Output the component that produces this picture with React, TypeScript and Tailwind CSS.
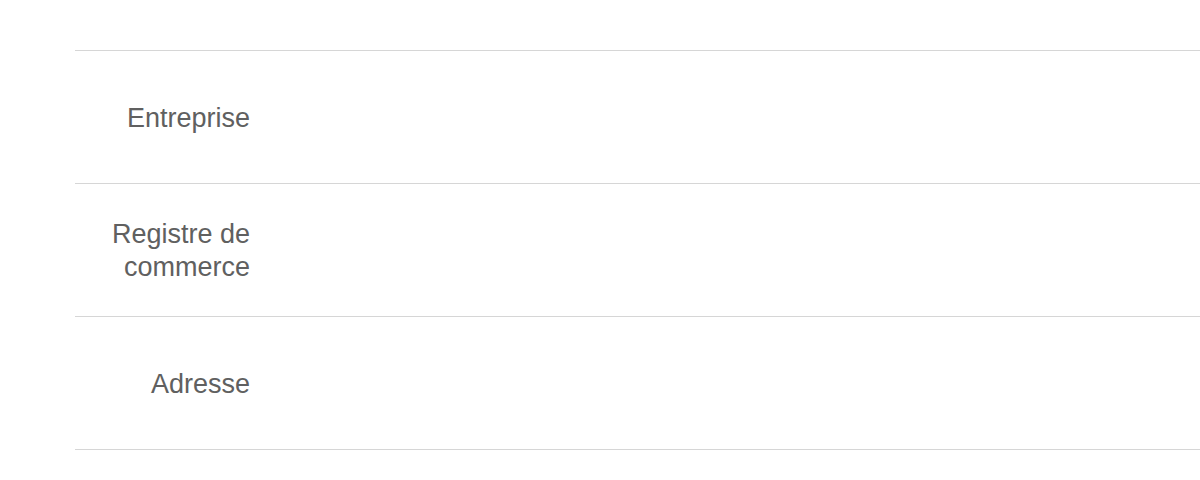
const ROWS = [
  { label: "Catégorie" },
  { label: "Entreprise" },
  { label: "Registre de commerce", lines: ["Registre de", "commerce"] },
  { label: "Adresse" },
]

export default function App() {
  return (
    <div
      className="h-[480px] w-[1200px] overflow-hidden bg-white"
      style={{ fontFamily: '"Liberation Sans", Arial, sans-serif' }}
    >
      <div className="-mt-[82px] ml-[75px]">
        {ROWS.map((row) => (
          <div key={row.label} className="flex h-[133px] items-center border-b border-[#d6d6d6]">
            <label className="w-[175px] pt-[2px] text-right text-[27px] leading-[33px] text-[#606060]">
              {row.lines
                ? row.lines.map((line) => (
                    <span key={line} className="block">
                      {line}
                    </span>
                  ))
                : row.label}
            </label>
            <div className="flex-1" />
          </div>
        ))}
      </div>
    </div>
  )
}
